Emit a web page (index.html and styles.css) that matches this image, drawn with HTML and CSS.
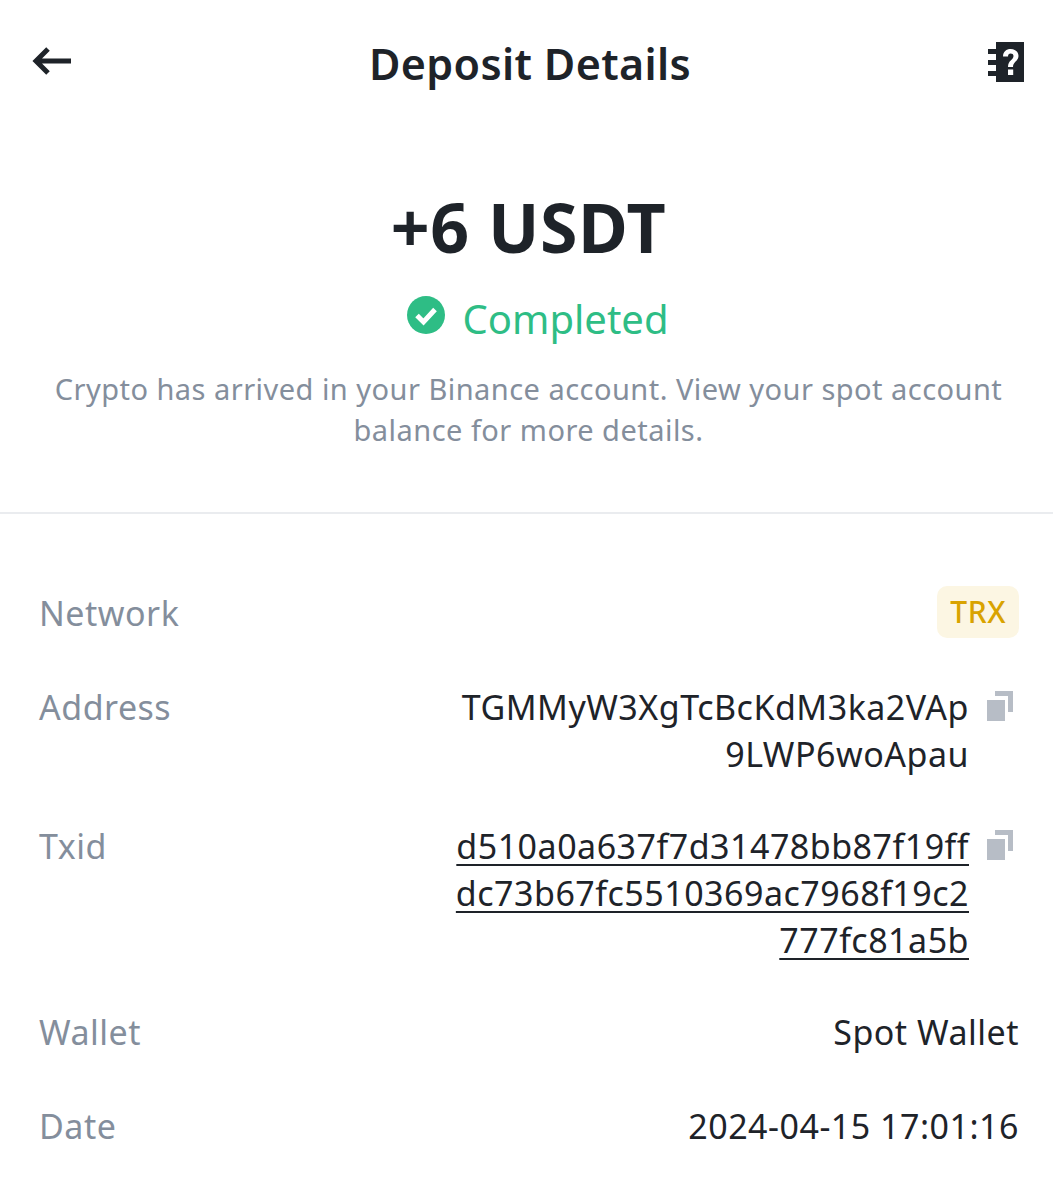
FILE: index.html
```html
<!DOCTYPE html>
<html lang="en">
<head>
  <meta charset="UTF-8">
  <meta name="viewport" content="width=device-width, initial-scale=1.0">
  <title>Deposit Details</title>
  <link rel="stylesheet" href="styles.css">
</head>
<body>
  <header class="top-bar">
    <svg class="back-icon" width="40" height="32" viewBox="0 0 40 32">
      <path d="M16 4 L4 16 L16 28 M4 16 H39" fill="none" stroke="#1e2329" stroke-width="5"/>
    </svg>
    <h1>Deposit Details</h1>
    <svg class="help-icon" width="36" height="40" viewBox="0 0 36 40">
      <path d="M8 0 H36 V40 H8 V34 H0 V29 H8 V23 H0 V18 H8 V12 H0 V7 H8 Z" fill="#1e2329"/>
      <path d="M15 14.500 C15 9.500 18.500 7 22.500 7 C27 7 30.500 9.800 30.500 14 C30.500 19 25 19.500 25 25 H20 C20 18 25.500 18 25.500 14 C25.500 12.300 24.300 11.500 22.500 11.500 C21 11.500 20 12.800 20 14.500 Z M20 27.500 H25.200 V33 H20 Z" fill="#fff"/>
    </svg>
  </header>

  <section class="summary">
    <div class="amount">+6 USDT</div>
    <div class="status">
      <svg width="38" height="38" viewBox="0 0 38 38">
        <circle cx="19" cy="19" r="19" fill="#2ebd85"/>
        <path d="M10 19.5 L16.5 26 L28 13.5" fill="none" stroke="#fff" stroke-width="5"/>
      </svg>
      <span>Completed</span>
    </div>
    <p class="note">Crypto has arrived in your Binance account. View your spot account<br>balance for more details.</p>
  </section>

  <section class="details">
    <div class="row row-network">
      <div class="label">Network</div>
      <div class="tag">TRX</div>
    </div>
    <div class="row row-address">
      <div class="label">Address</div>
      <div class="value-copy">
        <div class="value">TGMMyW3XgTcBcKdM3ka2VAp<br>9LWP6woApau</div>
        <svg class="copy-icon" width="26" height="30" viewBox="0 0 26 30">
          <path d="M0 9 H18 V30 H0 Z M8 0 H26 V21 H21 V5 H8 Z" fill="#b7bdc6"/>
        </svg>
      </div>
    </div>
    <div class="row row-txid">
      <div class="label">Txid</div>
      <div class="value-copy">
        <div class="value link">d510a0a637f7d31478bb87f19ff<br>dc73b67fc5510369ac7968f19c2<br>777fc81a5b</div>
        <svg class="copy-icon" width="26" height="30" viewBox="0 0 26 30">
          <path d="M0 9 H18 V30 H0 Z M8 0 H26 V21 H21 V5 H8 Z" fill="#b7bdc6"/>
        </svg>
      </div>
    </div>
    <div class="row row-wallet">
      <div class="label">Wallet</div>
      <div class="value">Spot Wallet</div>
    </div>
    <div class="row">
      <div class="label">Date</div>
      <div class="value">2024-04-15 17:01:16</div>
    </div>
  </section>
</body>
</html>
```

FILE: styles.css
```css
body {
  margin: 0;
  padding: 0;
  background: #fff;
  color: #1e2329;
  font-family: "Noto Sans", sans-serif;
  overflow-x: hidden;
}
.top-bar {
  display: flex;
  align-items: center;
  justify-content: space-between;
  height: 130px;
  padding: 0 29px 0 32px;
}
.top-bar h1 {
  margin: -2px 0 0;
  font-size: 43px;
  font-weight: 600;
  line-height: 60px;
  letter-spacing: 0.35px;
}
.back-icon { margin-top: -8px; }
.help-icon { margin-top: -6px; }

.summary {
  text-align: center;
  padding: 59px 40px 62px 44px;
  border-bottom: 2px solid #eaecef;
}
.amount {
  font-size: 68px;
  font-weight: 700;
  line-height: 76px;
  letter-spacing: 0.6px;
}
.status {
  display: flex;
  align-items: center;
  justify-content: center;
  gap: 18px;
  height: 60px;
  margin-top: 23px;
  padding-left: 18px;
  color: #2ebd85;
  font-size: 40px;
}
.status svg { margin-top: -6px; }
.note {
  margin: 20px 0 0;
  color: #848e9c;
  font-size: 29px;
  line-height: 41px;
  letter-spacing: 0.47px;
}

.details { padding: 72px 34px 0 39px; }
.row {
  display: flex;
  justify-content: space-between;
  align-items: flex-start;
  font-size: 34px;
  line-height: 47px;
  letter-spacing: 0.5px;
}
.row-network { align-items: center; margin-bottom: 46px; }
.row-network .label { margin-top: 3px; }
.row-address { margin-bottom: 45px; }
.row-txid { margin-bottom: 45px; }
.row-wallet { margin-bottom: 47px; }
.label { color: #848e9c; }
.value { text-align: right; }
.value.link { text-decoration: underline; text-underline-offset: 5px; text-decoration-thickness: 2px; }
.value-copy { display: flex; align-items: flex-start; gap: 18px; }
.copy-icon { margin: 7px 6px 0 0; }
.tag {
  background: #fcf6e3;
  color: #d9a300;
  font-size: 30px;
  line-height: 52px;
  padding: 0 13px;
  border-radius: 10px;
  font-weight: 500;
  letter-spacing: 0.5px;
}
```
